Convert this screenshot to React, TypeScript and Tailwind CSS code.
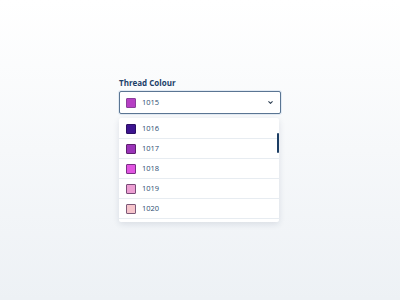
import { ChevronDown } from "lucide-react";

const options = [
  { code: "1016", color: "#3d1490", border: "#2a0f63" },
  { code: "1017", color: "#9a33b8", border: "#5e2070" },
  { code: "1018", color: "#e055e0", border: "#7a2f86" },
  { code: "1019", color: "#ec9ed2", border: "#7a4c78" },
  { code: "1020", color: "#f6c4cb", border: "#7d5a78" },
];

export default function App() {
  return (
    <div
      className="w-[400px] h-[300px] bg-gradient-to-b from-white to-[#edf1f5] flex justify-center"
      style={{ fontFamily: '"Open Sans", "Noto Sans", sans-serif' }}
    >
      <div className="w-[162px] pt-[78px]">
        <div className="text-[8px] font-bold text-[#1c4068] leading-[10px]">Thread Colour</div>

        {/* select */}
        <div className="mt-[3px] h-[23px] flex items-center border border-[#5a7593] rounded-[2px] bg-white px-[6px] shadow-[0_0_0_1px_rgba(220,230,240,0.8)]">
          <span className="w-[10px] h-[10px] rounded-[1px] bg-[#b63fc4] border border-[#8a3f9a]" />
          <span className="ml-[6px] text-[7.5px] text-[#2c4d70]">1015</span>
          <ChevronDown className="ml-auto w-[7px] h-[7px] text-[#2c3e52]" strokeWidth={3.5} />
        </div>

        {/* dropdown */}
        <div className="mt-[4px] w-[160px] h-[104px] pt-[1px] bg-white rounded-[2px] shadow-[0_2px_6px_rgba(30,50,80,0.12)] relative overflow-hidden">
          {options.map((o) => (
            <div key={o.code} className="h-[20px] flex items-center px-[7px] border-b border-[#e7ecf1]">
              <span
                className="w-[10px] h-[10px] rounded-[1px] border"
                style={{ backgroundColor: o.color, borderColor: o.border }}
              />
              <span className="ml-[6px] text-[7.5px] text-[#2c4d70]">{o.code}</span>
            </div>
          ))}
          <div className="absolute right-0 top-[15px] w-[2px] h-[20px] bg-[#1c3d63] rounded-[1px]" />
        </div>
      </div>
    </div>
  );
}
